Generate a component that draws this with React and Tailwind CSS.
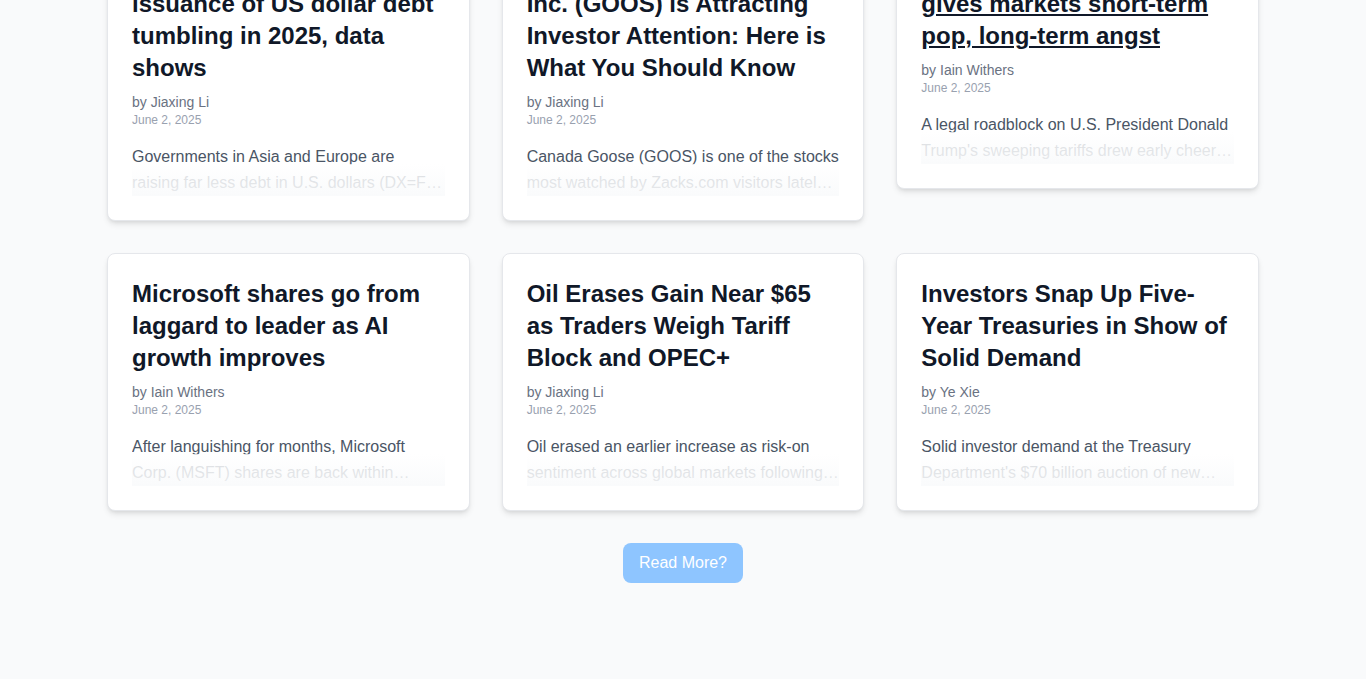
import React from "react";

const articles = [
  {
    title: "Asian and European issuance of US dollar debt tumbling in 2025, data shows",
    author: "Jiaxing Li",
    excerpt:
      "Governments in Asia and Europe are raising far less debt in U.S. dollars (DX=F) this year as investors shy away from the greenback.",
  },
  {
    title: "Canada Goose Holdings Inc. (GOOS) is Attracting Investor Attention: Here is What You Should Know",
    author: "Jiaxing Li",
    excerpt:
      "Canada Goose (GOOS) is one of the stocks most watched by Zacks.com visitors lately. So, it might be a good idea to review some of the factors.",
  },
  {
    title: "Legal roadblock on tariffs gives markets short-term pop, long-term angst",
    author: "Iain Withers",
    excerpt:
      "A legal roadblock on U.S. President Donald Trump's sweeping tariffs drew early cheers from investors, but the relief may prove fleeting.",
    underline: true,
  },
  {
    title: "Microsoft shares go from laggard to leader as AI growth improves",
    author: "Iain Withers",
    excerpt:
      "After languishing for months, Microsoft Corp. (MSFT) shares are back within striking distance of a record high as AI growth improves.",
  },
  {
    title: "Oil Erases Gain Near $65 as Traders Weigh Tariff Block and OPEC+",
    author: "Jiaxing Li",
    excerpt:
      "Oil erased an earlier increase as risk-on sentiment across global markets following a court ruling faded among traders.",
  },
  {
    title: "Investors Snap Up Five-Year Treasuries in Show of Solid Demand",
    author: "Ye Xie",
    excerpt:
      "Solid investor demand at the Treasury Department's $70 billion auction of new five-year notes helped calm the market.",
  },
];

function Card({ a }) {
  return (
    <div className="bg-white border border-gray-200 rounded-lg shadow-md p-6">
      <h2
        className={`text-2xl font-bold text-gray-900 leading-8 ${
          a.underline ? "underline underline-offset-2" : ""
        }`}
      >
        {a.title}
      </h2>
      <p className="mt-2 text-sm leading-5 text-gray-500">by {a.author}</p>
      <p className="text-xs leading-4 text-gray-400">June 2, 2025</p>
      <div className="relative mt-4">
        <p className="text-base leading-[26px] text-gray-600 line-clamp-2">{a.excerpt}</p>
        <div className="absolute bottom-0 left-0 right-0 h-8 bg-gradient-to-b from-white/80 to-gray-50/90"></div>
      </div>
    </div>
  );
}

export default function App() {
  return (
    <div
      className="min-h-screen bg-gray-50 overflow-hidden"
      style={{ fontFamily: '"Liberation Sans", Arial, sans-serif' }}
    >
      <div className="max-w-6xl mx-auto -mt-[69px] pb-24">
        <div className="grid grid-cols-3 gap-8 items-start">
          {articles.map((a, i) => (
            <Card key={i} a={a} />
          ))}
        </div>
        <div className="mt-8 flex justify-center">
          <button className="bg-blue-300 text-white text-base leading-6 px-4 py-2 rounded-lg">
            Read More?
          </button>
        </div>
      </div>
    </div>
  );
}
